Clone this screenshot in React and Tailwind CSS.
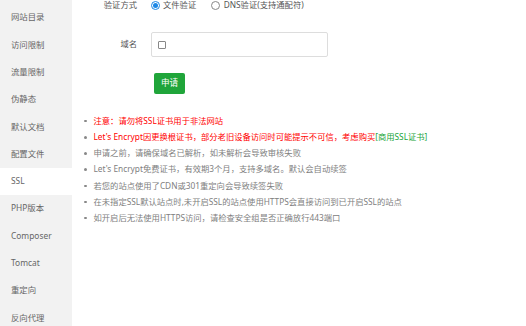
import React from 'react';

const menu = ['网站目录', '访问限制', '流量限制', '伪静态', '默认文档', '配置文件', 'SSL', 'PHP版本', 'Composer', 'Tomcat', '重定向', '反向代理'];

const tips = [
    { text: '注意：请勿将SSL证书用于非法网站', red: true },
    { text: 'Let\'s Encrypt因更换根证书，部分老旧设备访问时可能提示不可信，考虑购买', red: true, link: '[商用SSL证书]' },
    { text: '申请之前，请确保域名已解析，如未解析会导致审核失败' },
    { text: 'Let\'s Encrypt免费证书，有效期3个月，支持多域名。默认会自动续签' },
    { text: '若您的站点使用了CDN或301重定向会导致续签失败' },
    { text: '在未指定SSL默认站点时,未开启SSL的站点使用HTTPS会直接访问到已开启SSL的站点' },
    { text: '如开启后无法使用HTTPS访问，请检查安全组是否正确放行443端口' },
];

const App = () => {
    return (
        <div className="flex h-[326px] w-[526px] overflow-hidden bg-white font-['Noto_Sans','Noto_Sans_CJK_SC',sans-serif]">
            {/* Sidebar */}
            <aside className="w-[72px] shrink-0 bg-[#f2f2f2] pt-[4px]">
                {menu.map((item) => (
                    <div
                        key={item}
                        className={`flex h-[27.3px] items-center pl-[11px] text-[8.4px] text-[#666] ${item === 'SSL' ? 'bg-white' : ''}`}
                    >
                        {item}
                    </div>
                ))}
            </aside>

            {/* Content */}
            <main className="flex-1 text-[8.3px] text-[#555]">
                <div className="mt-[-6px] flex h-[23px] items-center">
                    <label className="w-[65px] text-right">验证方式</label>
                    <div className="ml-[14px] flex items-center">
                        <span className="flex h-[8.5px] w-[8.5px] items-center justify-center rounded-full border border-[#1e88e5]">
                            <span className="h-[4.5px] w-[4.5px] rounded-full bg-[#1e88e5]" />
                        </span>
                        <span className="ml-[3.5px]">文件验证</span>
                        <span className="ml-[15px] h-[8.5px] w-[8.5px] rounded-full border border-[#888]" />
                        <span className="ml-[4px]">DNS验证(支持通配符)</span>
                    </div>
                </div>

                <div className="mt-[15px] flex items-center">
                    <label className="w-[65px] text-right">域名</label>
                    <div className="ml-[14px] flex h-[25px] w-[177px] items-center rounded-[2px] border border-[#ddd] pl-[6px]">
                        <span className="h-[8px] w-[8px] rounded-[1px] border border-[#888]" />
                    </div>
                </div>

                <div className="mt-[16px] pl-[82px]">
                    <button className="h-[21px] w-[31px] rounded-[2px] bg-[#20a53a] text-[8.6px] text-white">申请</button>
                </div>

                <ul className="mt-[19px] pl-[12px]">
                    {tips.map((t, i) => (
                        <li key={i} className="flex h-[16.2px] items-center">
                            <span className="h-[2.5px] w-[2.5px] shrink-0 rounded-full bg-[#888]" />
                            <span className={`ml-[7px] whitespace-nowrap ${t.red ? 'text-[#f00]' : 'text-[#808080]'}`}>
                                {t.text}
                                {t.link && <span className="text-[#20a53a]">{t.link}</span>}
                            </span>
                        </li>
                    ))}
                </ul>
            </main>
        </div>
    );
};

export default App;
